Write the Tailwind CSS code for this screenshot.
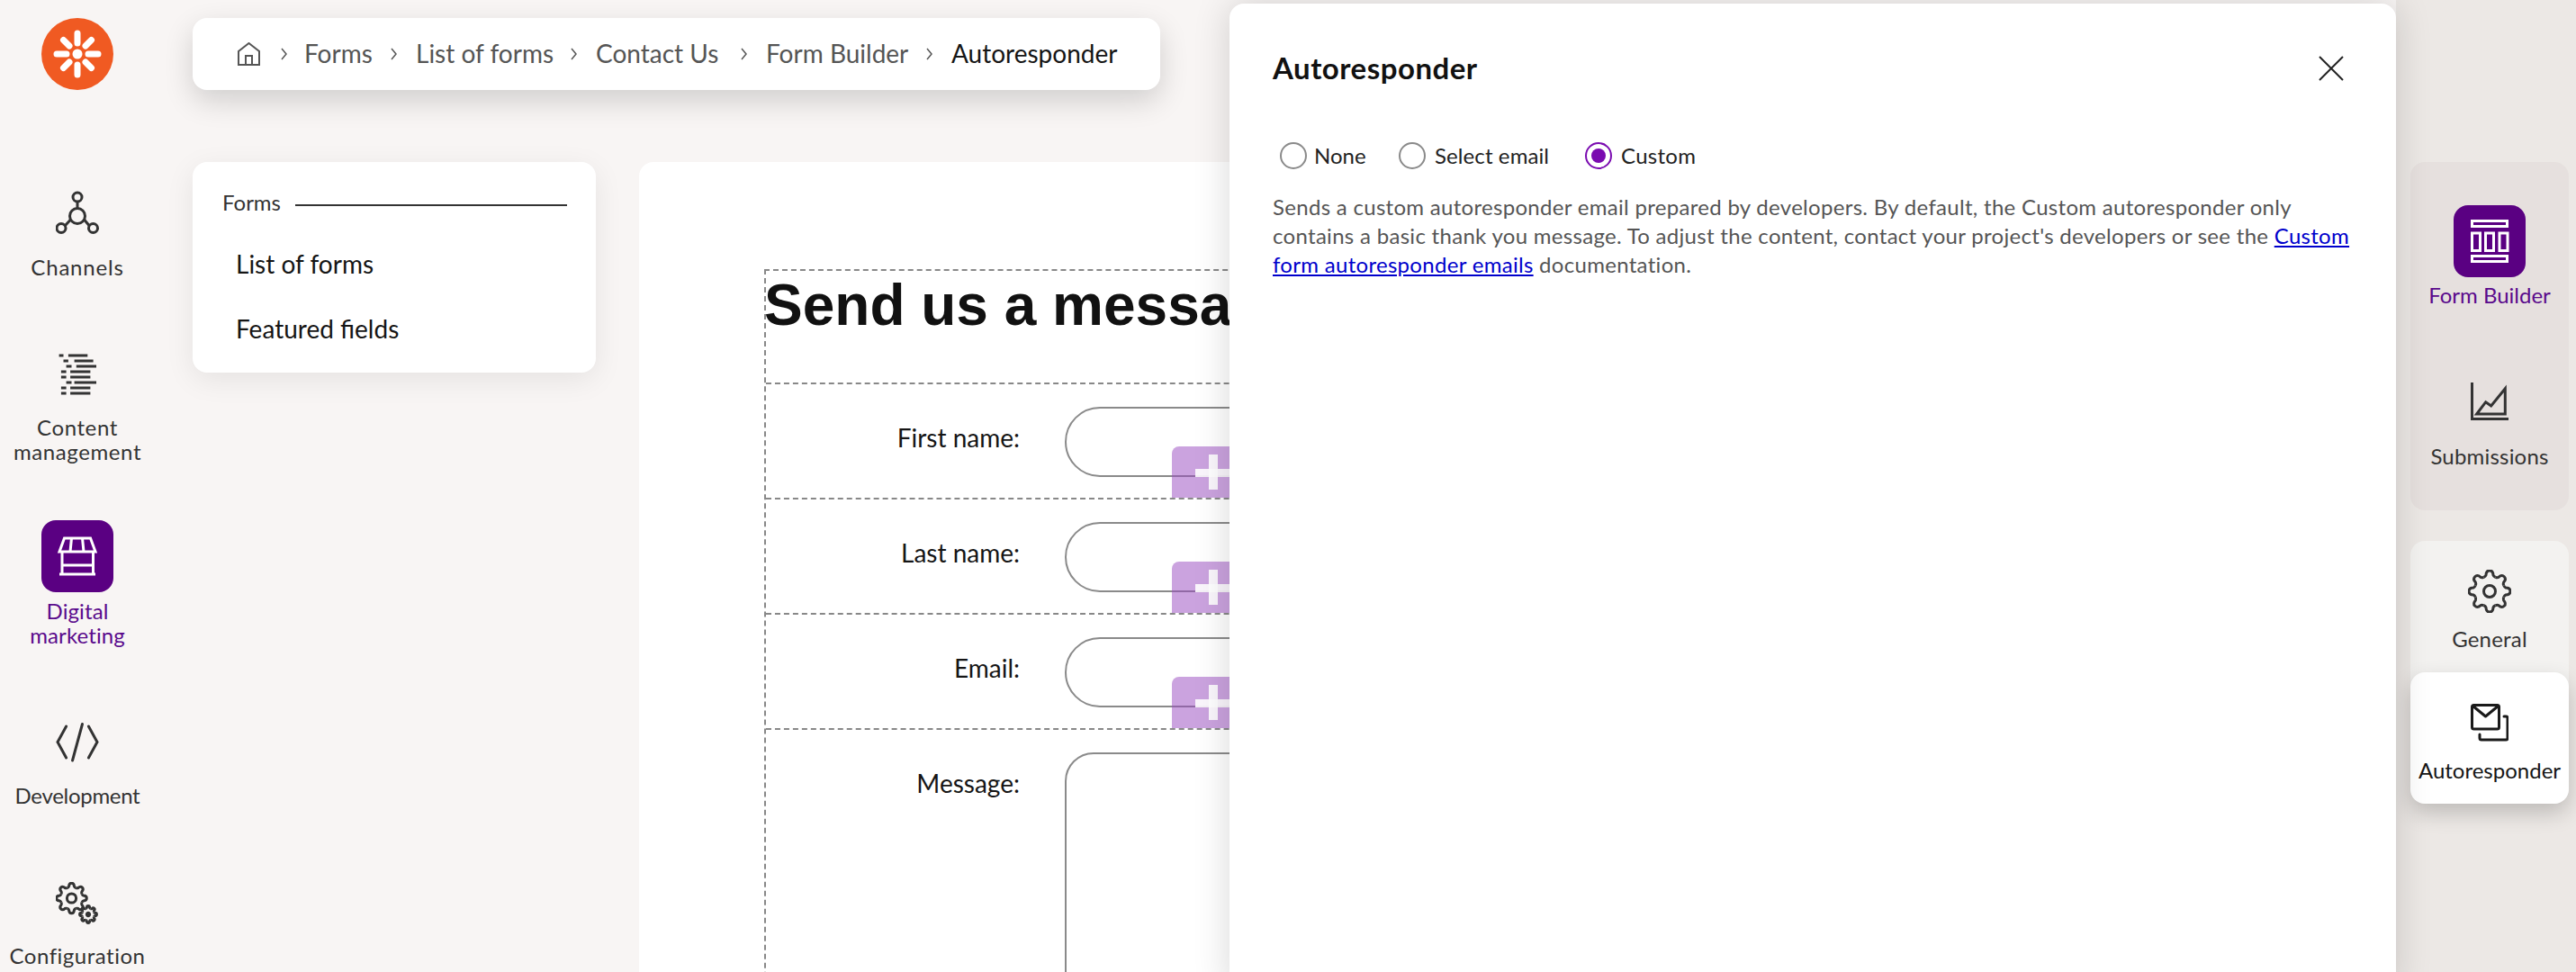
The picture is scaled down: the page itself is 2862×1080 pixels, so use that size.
<!DOCTYPE html>
<html lang="en">
<head>
  <meta charset="UTF-8" />
  <title>Autoresponder</title>
  <script src="https://cdn.jsdelivr.net/npm/@tailwindcss/browser@4"></script>
</head>
<body class="bg-[#f8f5f4] font-['Lato',sans-serif] text-[#333]">
  <!-- shared gear tooth -->
  <svg class="absolute w-0 h-0">
    <defs>
      <g id="gear">
        <path id="tooth" d="M-6.5-15.7Q-4.5-16.6-4-18Q-3.8-23 0-23Q3.8-23 4-18Q4.5-16.6 6.5-15.7" />
        <use href="#tooth" transform="rotate(45)" />
        <use href="#tooth" transform="rotate(90)" />
        <use href="#tooth" transform="rotate(135)" />
        <use href="#tooth" transform="rotate(180)" />
        <use href="#tooth" transform="rotate(225)" />
        <use href="#tooth" transform="rotate(270)" />
        <use href="#tooth" transform="rotate(315)" />
      </g>
    </defs>
  </svg>

  <div class="relative flex w-[2862px] h-[1080px] overflow-hidden">
    <!-- left nav -->
    <aside class="w-[172px] shrink-0 flex flex-col items-center text-[24px] leading-[27px] text-center">
      <svg class="mt-5 w-20 h-20 shrink-0" viewBox="0 0 80 80">
        <circle cx="40" cy="40" r="40" fill="#f05a22" />
        <circle cx="40" cy="40" r="5.5" fill="#fff" />
        <g stroke="#fff" stroke-width="7" stroke-linecap="round">
          <path d="M40 17V28M40 52V63M17 40H28M52 40H63M24.5 24.5L31 31M49 49L55.5 55.5M55.5 24.5L49 31M31 49L24.5 55.5" />
        </g>
      </svg>

      <svg class="mt-[112px] w-12 h-12 shrink-0" viewBox="0 0 48 48" fill="none" stroke="#333" stroke-width="3">
        <circle cx="24" cy="28" r="8.5" />
        <circle cx="24" cy="7" r="5" />
        <circle cx="6" cy="41.5" r="5" />
        <circle cx="41.5" cy="41.5" r="5" />
        <path d="M24 12V19.5M16.5 32L10.5 38.5M31.5 32L37 38.5" />
      </svg>
      <span class="mt-[23px] tracking-[0.8px]">Channels</span>

      <svg class="mt-[82px] w-12 h-12 shrink-0" viewBox="0 0 48 48" fill="none" stroke="#333" stroke-width="3">
        <path d="M3.6 3H8.5M13.9 3H35.3M8.5 9H13.9M20.6 9H41.6M11.6 15H17.5M22.8 15H45M5.9 21H11.6M16.1 21H38.4M5.9 27H11.6M16.1 27H38.4M11.6 33H17.5M20.6 33H45M5.9 39H11.6M16.1 39H38.4M5.9 45H11.6M16.1 45H38.4" />
      </svg>
      <span class="mt-[21px] tracking-[0.6px]">Content<br />management</span>

      <div class="mt-[63px] w-20 h-20 shrink-0 rounded-2xl bg-[#5a0082] flex items-center justify-center">
        <svg class="w-20 h-20" viewBox="0 0 80 80" fill="none" stroke="#fff" stroke-width="3">
          <path d="M25.5 20H54.5L60 35H20ZM33.5 20L32 35M45.5 20L47 35M23 35V60M57.5 35V60M23 50H57.5M20 60H60" />
        </svg>
      </div>
      <span class="mt-[7px] text-[#5a0a8c] tracking-[0.1px]">Digital<br />marketing</span>

      <svg class="mt-[81px] w-12 h-12 shrink-0" viewBox="0 0 48 48" fill="none" stroke="#333" stroke-width="3" stroke-linecap="round">
        <path d="M11.6 7L2 24.5L11.6 42M29.5 4.5L18.5 45M36.4 7L46 24.5L36.4 42" />
      </svg>
      <span class="mt-[22px] tracking-[-0.3px]">Development</span>

      <svg class="mt-[83px] w-12 h-12 shrink-0" viewBox="0 0 48 48" fill="none" stroke="#333" stroke-linejoin="round">
        <g transform="translate(17.5 18) scale(.73)" stroke-width="4.1">
          <use href="#gear" />
          <circle r="7" />
        </g>
        <g transform="translate(36 36) scale(.41)" stroke-width="7.3">
          <use href="#gear" />
          <circle r="4" fill="#333" />
        </g>
      </svg>
      <span class="mt-[20px] tracking-[0.5px]">Configuration</span>
    </aside>

    <!-- middle -->
    <main class="w-[2490px] shrink-0 pl-[42px] flex flex-col">
      <nav class="mt-5 w-[1075px] h-20 shrink-0 rounded-2xl bg-white shadow-[0_12px_32px_rgba(0,0,0,0.16)] flex items-center pl-[50px] text-[28px] text-[#555]">
        <svg class="w-[25px] h-[26px] shrink-0" viewBox="0 0 25 26" fill="none" stroke="#555" stroke-width="2">
          <path d="M1 25V10L12.5 1L24 10V25ZM9 25V15H16V25" />
        </svg>
        <svg class="ml-[23px] mr-[19px] w-[7px] h-[14px] shrink-0" viewBox="0 0 7 14" fill="none" stroke="#555" stroke-width="1.5"><path d="M1 1L6 7L1 13" /></svg>
        <a class="mb-[2px] w-[75px] whitespace-nowrap">Forms</a>
        <svg class="mx-[21px] w-[7px] h-[14px] shrink-0" viewBox="0 0 7 14" fill="none" stroke="#555" stroke-width="1.5"><path d="M1 1L6 7L1 13" /></svg>
        <a class="mb-[2px] w-[151px] whitespace-nowrap">List of forms</a>
        <svg class="mx-[21px] w-[7px] h-[14px] shrink-0" viewBox="0 0 7 14" fill="none" stroke="#555" stroke-width="1.5"><path d="M1 1L6 7L1 13" /></svg>
        <a class="mb-[2px] w-[140px] whitespace-nowrap">Contact Us</a>
        <svg class="mx-[21px] w-[7px] h-[14px] shrink-0" viewBox="0 0 7 14" fill="none" stroke="#555" stroke-width="1.5"><path d="M1 1L6 7L1 13" /></svg>
        <a class="mb-[2px] w-[157px] whitespace-nowrap">Form Builder</a>
        <svg class="mx-[21px] w-[7px] h-[14px] shrink-0" viewBox="0 0 7 14" fill="none" stroke="#555" stroke-width="1.5"><path d="M1 1L6 7L1 13" /></svg>
        <span class="mb-[2px] whitespace-nowrap text-[#151515]">Autoresponder</span>
      </nav>

      <div class="mt-20 flex gap-12 flex-1 min-h-0">
        <!-- forms menu -->
        <section class="w-[448px] h-[234px] shrink-0 rounded-2xl bg-white shadow-[0_8px_32px_rgba(0,0,0,0.08)] pl-[33px] pr-8 pt-[29px]">
          <div class="flex items-center gap-4 text-[24px] leading-8">
            <span>Forms</span>
            <div class="flex-1 h-0.5 mt-[6px] bg-[#333]"></div>
          </div>
          <ul class="mt-[34px] pl-[15px] text-[28px] leading-9 text-[#151515]">
            <li>List of forms</li>
            <li class="mt-9">Featured fields</li>
          </ul>
        </section>

        <!-- form canvas -->
        <section class="flex-1 rounded-t-2xl bg-white pl-[139px] pt-[119px] overflow-hidden">
          <div class="border-t-2 border-l-2 border-dashed border-[#888] text-[28px] text-[#151515]">
            <div class="h-32 border-b-2 border-dashed border-[#888]">
              <h1 class="-ml-0.5 -mt-[2px] font-['Liberation_Sans',sans-serif] text-[64px] leading-[80px] font-bold text-[#111]">Send us a message</h1>
            </div>

            <div class="relative h-32 flex items-start border-b-2 border-dashed border-[#888]">
              <label class="w-[282px] mt-[39px] leading-10 text-right">First name:</label>
              <div class="ml-[50px] mt-[25px] w-[900px] h-[78px] rounded-full border-2 border-[#8a8a8a]"></div>
              <div class="absolute left-[451px] bottom-0 w-[200px] h-[57px] rounded-tl-lg bg-[#9747bf]/50">
                <div class="absolute left-[26px] top-[25px] w-[60px] h-[9px] bg-white/90"></div>
                <div class="absolute left-[41px] top-[9px] w-[10px] h-[39px] bg-white/90"></div>
              </div>
            </div>

            <div class="relative h-32 flex items-start border-b-2 border-dashed border-[#888]">
              <label class="w-[282px] mt-[39px] leading-10 text-right">Last name:</label>
              <div class="ml-[50px] mt-[25px] w-[900px] h-[78px] rounded-full border-2 border-[#8a8a8a]"></div>
              <div class="absolute left-[451px] bottom-0 w-[200px] h-[57px] rounded-tl-lg bg-[#9747bf]/50">
                <div class="absolute left-[26px] top-[25px] w-[60px] h-[9px] bg-white/90"></div>
                <div class="absolute left-[41px] top-[9px] w-[10px] h-[39px] bg-white/90"></div>
              </div>
            </div>

            <div class="relative h-32 flex items-start border-b-2 border-dashed border-[#888]">
              <label class="w-[282px] mt-[39px] leading-10 text-right">Email:</label>
              <div class="ml-[50px] mt-[25px] w-[900px] h-[78px] rounded-full border-2 border-[#8a8a8a]"></div>
              <div class="absolute left-[451px] bottom-0 w-[200px] h-[57px] rounded-tl-lg bg-[#9747bf]/50">
                <div class="absolute left-[26px] top-[25px] w-[60px] h-[9px] bg-white/90"></div>
                <div class="absolute left-[41px] top-[9px] w-[10px] h-[39px] bg-white/90"></div>
              </div>
            </div>

            <div class="flex items-start">
              <label class="w-[282px] mt-[39px] leading-10 text-right">Message:</label>
              <div class="ml-[50px] mt-[25px] w-[900px] h-[400px] rounded-[32px] border-2 border-[#8a8a8a]"></div>
            </div>
          </div>
        </section>
      </div>
    </main>

    <!-- right nav -->
    <aside class="w-[200px] shrink-0 bg-[#ece8e5] pl-4 pr-2 text-[24px] leading-[27px] text-center">
      <div class="mt-[180px] h-[387px] rounded-2xl bg-[#e6e0de] flex flex-col items-center pt-12">
        <div class="w-20 h-20 shrink-0 rounded-2xl bg-[#5a0082]">
          <svg class="w-20 h-20" viewBox="0 0 80 80" fill="none" stroke="#fff" stroke-width="3">
            <rect x="20.5" y="17.5" width="39" height="6" />
            <rect x="20.5" y="31" width="9" height="19.5" />
            <rect x="35.5" y="31" width="9" height="19.5" />
            <rect x="51" y="31" width="9" height="19.5" />
            <rect x="20.5" y="56.5" width="39" height="6" />
          </svg>
        </div>
        <span class="mt-[6px] text-[#5a0a8c]">Form Builder</span>
        <svg class="mt-[84px] w-[42px] h-[42px] shrink-0" viewBox="0 0 42 42" fill="none" stroke="#333" stroke-width="3">
          <path d="M1.5 0V40.5H42" />
          <path d="M6.7 35L16.7 21.7L22.7 26L38.3 6.7V35Z" />
        </svg>
        <span class="mt-[26px] tracking-[0.2px]">Submissions</span>
      </div>

      <div class="mt-[34px] rounded-2xl bg-[#f3f2f0]">
        <div class="h-[146px] flex flex-col items-center pt-8">
          <svg class="w-12 h-12 shrink-0" viewBox="-24 -24 48 48" fill="none" stroke="#333" stroke-width="3" stroke-linejoin="round">
            <use href="#gear" />
            <circle r="6.5" />
          </svg>
          <span class="mt-[15px] tracking-[0.2px]">General</span>
        </div>
        <div class="h-[146px] rounded-2xl bg-white shadow-[0_10px_24px_rgba(0,0,0,0.2)] flex flex-col items-center pt-[35px] text-[#151515]">
          <svg class="w-[42px] h-[42px] shrink-0" viewBox="0 0 42 42" fill="none" stroke="#1a1a1a" stroke-width="3" stroke-linejoin="round" stroke-linecap="round">
            <rect x="1.5" y="1.5" width="30" height="26.5" rx="2" />
            <path d="M2.5 2.5L16.5 14L30.5 2.5" />
            <path d="M37 14H39A2 2 0 0 1 41 16V38A2 2 0 0 1 39 40H12A2 2 0 0 1 10 38V34" />
          </svg>
          <span class="mt-[18px]">Autoresponder</span>
        </div>
      </div>
    </aside>

    <!-- autoresponder modal -->
    <div class="absolute left-[1366px] top-1 w-[1296px] h-[1100px] rounded-2xl bg-white shadow-[0_0_40px_rgba(0,0,0,0.16)] px-12 pt-12">
      <div class="flex items-center justify-between h-12">
        <h2 class="text-[33px] tracking-[0.5px] font-bold text-[#111]">Autoresponder</h2>
        <svg class="mr-[10px] w-7 h-7" viewBox="0 0 28 28" fill="none" stroke="#222" stroke-width="2"><path d="M1 1L27 27M27 1L1 27" /></svg>
      </div>

      <div class="mt-[58px] flex items-center text-[24px] leading-[30px] text-[#222]">
        <span class="ml-[8px] w-[30px] h-[30px] rounded-full border-2 border-[#8a8a8a]"></span>
        <span class="ml-[8px] w-[94px]">None</span>
        <span class="w-[30px] h-[30px] rounded-full border-2 border-[#8a8a8a]"></span>
        <span class="ml-[10px] w-[167px] tracking-[0.1px]">Select email</span>
        <span class="w-[30px] h-[30px] rounded-full border-2 border-[#7a0bb0] flex items-center justify-center">
          <span class="w-4 h-4 rounded-full bg-[#7a0bb0]"></span>
        </span>
        <span class="ml-[10px] tracking-[0.3px]">Custom</span>
      </div>

      <p class="mt-[26px] text-[24px] leading-8 tracking-[0.3px] text-[#555] whitespace-nowrap">
        Sends a custom autoresponder email prepared by developers. By default, the Custom autoresponder only<br />
        contains a basic thank you message. To adjust the content, contact your project's developers or see the <a class="text-[#0000cc] underline">Custom</a><br />
        <a class="text-[#0000cc] underline">form autoresponder emails</a> documentation.
      </p>
    </div>
  </div>
</body>
</html>
